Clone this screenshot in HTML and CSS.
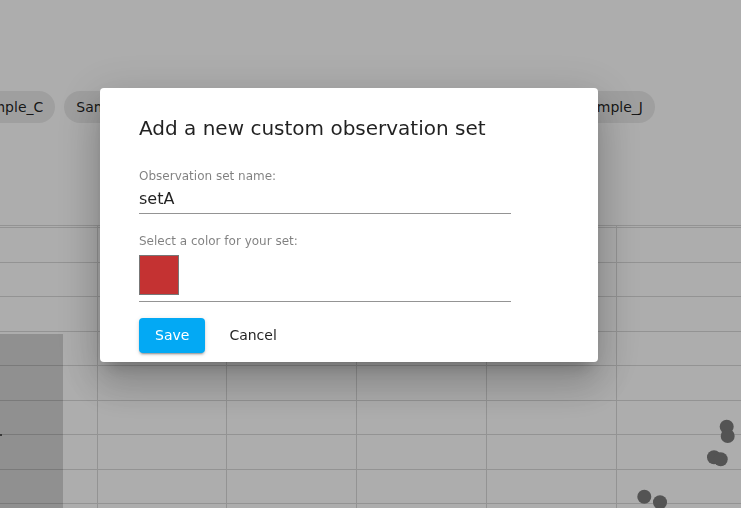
FILE: index.html
```html
<!DOCTYPE html>
<html lang="en">
<head>
<meta charset="utf-8">
<title>Add a new custom observation set</title>
<link rel="stylesheet" href="styles.css">
</head>
<body>
<div class="app">
  <div class="chips">
    <span class="chip">Sample_C</span>
    <span class="chip">Sample_D</span>
    <span class="chip">Sample_E</span>
    <span class="chip">Sample_F</span>
    <span class="chip">Sample_G</span>
    <span class="chip chip-last">Sample_J</span>
  </div>
  <div class="plot">
    <svg class="plot-svg" width="741" height="283" viewBox="0 0 741 283" xmlns="http://www.w3.org/2000/svg">
      <g class="grid" shape-rendering="crispEdges">
        <line x1="0" y1="0.5" x2="741" y2="0.5"/>
        <line x1="0" y1="2.5" x2="741" y2="2.5"/>
        <line x1="0" y1="37.5" x2="741" y2="37.5"/>
        <line x1="0" y1="71.5" x2="741" y2="71.5"/>
        <line x1="0" y1="106.5" x2="741" y2="106.5"/>
        <line x1="0" y1="140.5" x2="741" y2="140.5"/>
        <line x1="0" y1="175.5" x2="741" y2="175.5"/>
        <line x1="0" y1="209.5" x2="741" y2="209.5"/>
        <line x1="0" y1="244.5" x2="741" y2="244.5"/>
        <line x1="0" y1="278.5" x2="741" y2="278.5"/>
        <line x1="97.5" y1="0" x2="97.5" y2="283"/>
        <line x1="226.5" y1="0" x2="226.5" y2="283"/>
        <line x1="356.5" y1="0" x2="356.5" y2="283"/>
        <line x1="486.5" y1="0" x2="486.5" y2="283"/>
        <line x1="616.5" y1="0" x2="616.5" y2="283"/>
      </g>
      <rect class="bar" x="0" y="109" width="63" height="174"/>
      <rect class="tick" x="0" y="209" width="2" height="2"/>
      <g class="dots">
        <circle cx="726.7" cy="201.7" r="7"/>
        <circle cx="727.7" cy="211" r="7"/>
        <circle cx="714" cy="232.3" r="7"/>
        <circle cx="720.7" cy="234.3" r="7"/>
        <circle cx="644.3" cy="271.7" r="7"/>
        <circle cx="660" cy="277.3" r="7"/>
      </g>
    </svg>
  </div>
</div>

<div class="overlay">
  <div class="dialog" role="dialog">
    <h2 class="dialog-title">Add a new custom observation set</h2>
    <div class="field field-name">
      <label class="field-label">Observation set name:</label>
      <div class="field-input">setA</div>
    </div>
    <div class="field field-color">
      <label class="field-label">Select a color for your set:</label>
      <div class="field-swatch-row">
        <span class="swatch"></span>
      </div>
    </div>
    <div class="actions">
      <button class="btn btn-primary">Save</button>
      <button class="btn btn-text">Cancel</button>
    </div>
  </div>
</div>
</body>
</html>
```
FILE: styles.css
```css
html, body {
  margin: 0;
  padding: 0;
  overflow: hidden;
}
body {
  background: #ffffff;
  font-family: "DejaVu Sans", "Liberation Sans", sans-serif;
  width: 741px;
  height: 508px;
}
.app {
  display: flex;
  flex-direction: column;
  height: 508px;
}
.chips {
  display: flex;
  gap: 9px;
  margin-top: 91px;
  margin-left: -38px;
  padding-right: 86px;
  height: 32px;
  white-space: nowrap;
}
.chip {
  display: inline-flex;
  align-items: center;
  height: 32px;
  padding: 0 12px;
  border-radius: 16px;
  background: #ebebeb;
  color: rgba(0, 0, 0, 0.87);
  font-size: 14px;
  flex: none;
}
.chip-last {
  margin-left: auto;
}
.plot {
  margin-top: 102px;
  flex: 1;
}
.plot-svg {
  display: block;
}
.grid line {
  stroke: #d9d9d9;
  stroke-width: 1;
}
.bar {
  fill: rgba(0, 0, 0, 0.17);
}
.tick {
  fill: #555;
}
.dots circle {
  fill: #7c7c7c;
}

.overlay {
  position: fixed;
  inset: 0;
  background: rgba(0, 0, 0, 0.32);
  display: flex;
  align-items: flex-start;
  padding: 88px 0 0 100px;
}
.dialog {
  width: 498px;
  box-sizing: border-box;
  background: #fff;
  border-radius: 4px;
  padding: 28px 39px 9px;
  box-shadow: 0px 11px 15px -7px rgba(0, 0, 0, 0.2),
              0px 24px 38px 3px rgba(0, 0, 0, 0.14),
              0px 9px 46px 8px rgba(0, 0, 0, 0.12);
  display: flex;
  flex-direction: column;
}
.dialog-title {
  margin: 0;
  font-size: 20px;
  font-weight: 400;
  line-height: 24px;
  color: rgba(0, 0, 0, 0.87);
}
.field {
  width: 372px;
  display: flex;
  flex-direction: column;
}
.field-name {
  margin-top: 29px;
}
.field-color {
  margin-top: 20px;
}
.field-label {
  font-size: 12px;
  line-height: 14px;
  color: rgba(0, 0, 0, 0.5);
}
.field-input {
  margin-top: 6px;
  font-size: 16px;
  line-height: 19px;
  padding-bottom: 5px;
  color: rgba(0, 0, 0, 0.87);
  border-bottom: 1px solid rgba(0, 0, 0, 0.42);
}
.field-swatch-row {
  margin-top: 7px;
  padding-bottom: 6px;
  border-bottom: 1px solid rgba(0, 0, 0, 0.42);
  display: flex;
}
.swatch {
  width: 38px;
  height: 38px;
  border: 1px solid #777;
  background: #c43232;
}
.actions {
  margin-top: 16px;
  display: flex;
  gap: 8px;
}
.btn {
  font-family: inherit;
  font-size: 14px;
  line-height: 19px;
  padding: 8px 16px;
  border: none;
  border-radius: 4px;
  background: transparent;
  cursor: pointer;
}
.btn-primary {
  background: #03a9f4;
  color: #fff;
  box-shadow: 0px 3px 1px -2px rgba(0, 0, 0, 0.2),
              0px 2px 2px 0px rgba(0, 0, 0, 0.14),
              0px 1px 5px 0px rgba(0, 0, 0, 0.12);
}
.btn-text {
  color: rgba(0, 0, 0, 0.87);
}
```
